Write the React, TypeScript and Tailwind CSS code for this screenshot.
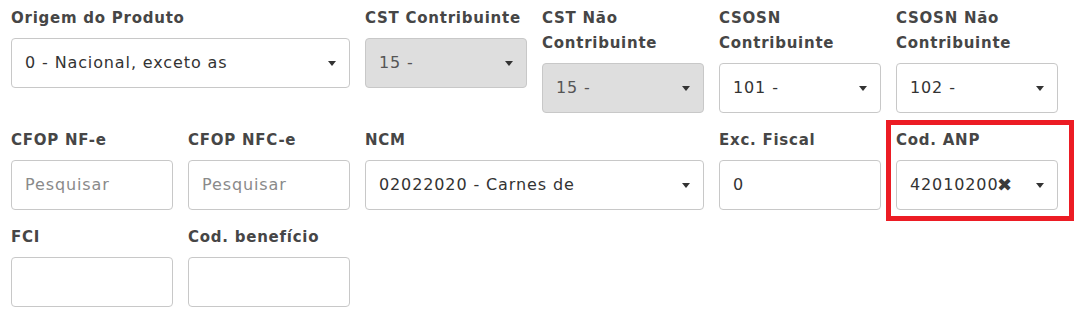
const Caret = () => (
  <span className="ml-auto h-0 w-0 border-x-[4.5px] border-t-[5px] border-x-transparent border-t-[#333]" />
);

interface FieldProps {
  label: string;
  className?: string;
  children: React.ReactNode;
}

const Field = ({ label, className, children }: FieldProps) => (
  <div className={`flex flex-col ${className ?? ""}`}>
    <label className="mb-[7px] text-[15px] font-bold leading-[25px] tracking-[0.05em] text-[#464646]">
      {label}
    </label>
    {children}
  </div>
);

interface SelectProps {
  value: string;
  disabled?: boolean;
  clear?: boolean;
}

const Select = ({ value, disabled, clear }: SelectProps) => (
  <div
    className={`relative flex h-[50px] items-center rounded-[4px] border border-[#c8c8c8] pl-[13px] pr-[13px] text-[16px] tracking-[0.055em] ${
      disabled ? "bg-[#dedede] text-[#555]" : "bg-white text-[#333]"
    }`}
  >
    <span className="whitespace-nowrap">{value}</span>
    {clear && (
      <span className="absolute right-[44px] top-1/2 -translate-y-1/2 text-[18px] leading-none text-[#3a3a3a]">
        ✖
      </span>
    )}
    <Caret />
  </div>
);

const Input = ({ value, placeholder }: { value?: string; placeholder?: string }) => (
  <div className="flex h-[50px] items-center rounded-[4px] border border-[#c8c8c8] bg-white pl-[13px] text-[16px] tracking-[0.055em]">
    {value ? (
      <span className="text-[#333]">{value}</span>
    ) : (
      <span className="text-[#8a8a8a]">{placeholder}</span>
    )}
  </div>
);

export default function App() {
  return (
    <div
      className="relative h-[328px] w-[1081px] overflow-hidden bg-white pl-[11px] pt-[6px]"
      style={{ fontFamily: '"DejaVu Sans", "Noto Sans", sans-serif' }}
    >
      <div className="grid grid-cols-[repeat(6,162px)] items-start gap-x-[15px] gap-y-[15px]">
        <Field label="Origem do Produto" className="col-span-2">
          <Select value="0 - Nacional, exceto as" />
        </Field>
        <Field label="CST Contribuinte">
          <Select value="15 -" disabled />
        </Field>
        <Field label="CST Não Contribuinte">
          <Select value="15 -" disabled />
        </Field>
        <Field label="CSOSN Contribuinte">
          <Select value="101 -" />
        </Field>
        <Field label="CSOSN Não Contribuinte">
          <Select value="102 -" />
        </Field>

        <Field label="CFOP NF-e">
          <Input placeholder="Pesquisar" />
        </Field>
        <Field label="CFOP NFC-e">
          <Input placeholder="Pesquisar" />
        </Field>
        <Field label="NCM" className="col-span-2">
          <Select value="02022020 - Carnes de" />
        </Field>
        <Field label="Exc. Fiscal">
          <Input value="0" />
        </Field>
        <Field label="Cod. ANP">
          <Select value="42010200" clear />
        </Field>

        <Field label="FCI">
          <Input />
        </Field>
        <Field label="Cod. benefício">
          <Input />
        </Field>
      </div>

      <div className="pointer-events-none absolute left-[886px] top-[120px] h-[101px] w-[188px] border-[5px] border-[#ec1c24]" />
    </div>
  );
}
